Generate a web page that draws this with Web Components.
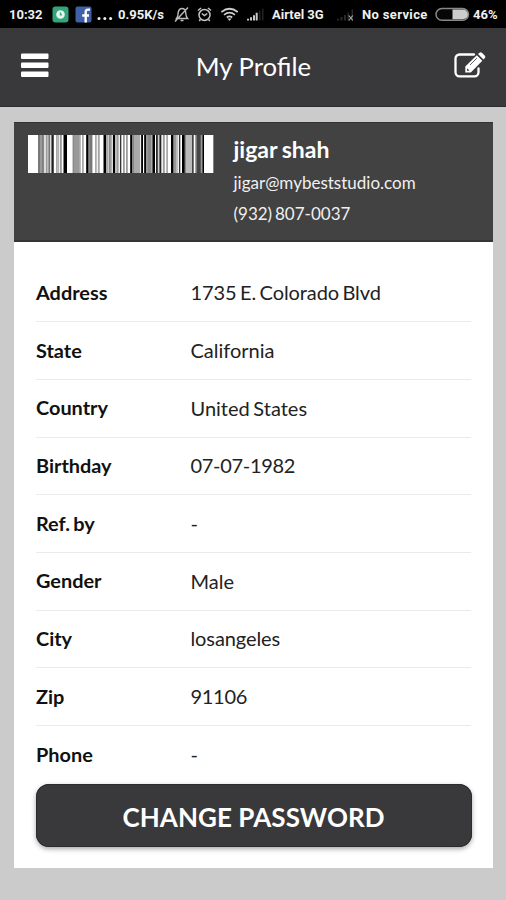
<!DOCTYPE html>
<html lang="en">
<head>
<meta charset="utf-8">
<title>My Profile</title>
<style>
html,body{margin:0;height:100%;background:#cbcbcb;overflow:hidden}
body{font-family:Lato,"Liberation Sans",sans-serif;color:#111}
</style>
</head>
<body>
<profile-screen></profile-screen>
<script>
const define = (name, html, setup) => customElements.define(name, class extends HTMLElement {
  constructor() {
    super();
    this.attachShadow({mode: 'open'}).innerHTML = html;
  }
  connectedCallback() { if (setup) setup(this, this.shadowRoot); }
});

define('status-bar', `
<style>
:host{display:grid;grid-template-columns:43px 23px 22px 21px 56px 23px 24px 26px 25px 65px 25px 73px 38px 33px;height:28px;padding-left:9px;box-sizing:border-box;background:#000;color:#f0f0f0;font:700 13px/30px Roboto,sans-serif;align-items:center;white-space:nowrap;overflow:hidden}
svg{display:block;margin-top:1px}
.t{height:28px;line-height:30px}
.wide{letter-spacing:.35px}
</style>
<span class="t">10:32</span>
<svg width="17" height="17" viewBox="0 0 17 17"><rect x=".5" y=".5" width="16" height="16" rx="3" fill="#35a47c"/><circle cx="8.5" cy="8.500" r="4.300" fill="#e5f5ee"/><path d="M8.500 6.500v2.300h1.500" fill="none" stroke="#35a47c" stroke-width="1.300"/></svg>
<svg width="17" height="17" viewBox="0 0 17 17"><rect x=".5" y=".5" width="16" height="16" rx="2" fill="#3f5fa6"/><path d="M15 3.600h-2c-1.800 0-2.300.9-2.300 2.500V16.500M7.200 9.500H14" fill="none" stroke="#fff" stroke-width="2.400"/></svg>
<svg width="17" height="17" viewBox="0 0 17 17" fill="#eee"><circle cx="2" cy="12.600" r="1.500"/><circle cx="7.800" cy="12.600" r="1.500"/><circle cx="13.600" cy="12.600" r="1.500"/></svg>
<span class="t">0.95K/s</span>
<svg width="17" height="17" viewBox="0 0 17 17" fill="none" stroke="#bbb" stroke-width="1.400"><path d="M2.500 12.500C4.500 10.500 3.700 8.500 4.300 6 4.900 3.500 6.300 2.500 8 2.500s3.200 1 3.600 3.500c.5 2.500 0 4.500 2 6.500zM6.500 14.500h3M14 1.500L1 15.500"/></svg>
<svg width="17" height="17" viewBox="0 0 17 17" fill="none" stroke="#c4c4c4" stroke-width="1.500"><circle cx="7.500" cy="9" r="5.500"/><path d="M1 4.500L4 2M14 4.500L11 2M4.800 7.500L7.500 9.500l2.700-2M3.300 13.500l-1 1.500M11.700 13.500l1 1.500"/></svg>
<svg width="18" height="17" viewBox="0 0 18 17" fill="none" stroke="#ccc" stroke-width="1.700"><path d="M.3 6Q8.500-.5 16.700 6M3 8.800Q8.500 4.500 14 8.800M5.800 11.500Q8.500 9.300 11.200 11.500"/><path d="M6.500 12.500h4l-2 2.500z" fill="#ccc" stroke="none"/></svg>
<svg width="18" height="17" viewBox="0 0 18 17"><path d="M0 12.800h2V14.500H0zM3 11.300h2v3.200H3zM6 9.300h2v5.200H6zM8.700 6.800h2v7.700h-2z" fill="#c8c8c8"/><path d="M12 4.500h1.500v10H12zM15 2.500h1.500v12H15z" fill="#222"/></svg>
<span class="t">Airtel 3G</span>
<svg width="18" height="17" viewBox="0 0 18 17"><path d="M0 12.800h2v1.700H0zM3.500 11h2v3.500h-2zM7 9h2v5.500H7zM10.500 6.500h1.500v8h-1.500zM14.500 3.500h1.500v11h-1.500z" fill="#292929"/><path d="M11.800 9.500l4 5M15.800 9.500l-4 5" stroke="#aaa" stroke-width="1.200"/></svg>
<span class="t wide">No service</span>
<svg width="35" height="15" viewBox="0 0 35 15"><rect x="1" y="1.500" width="32.500" height="11.800" rx="5.900" fill="#060606" stroke="#888" stroke-width="1.500"/><path d="M17.500 2.500h10.500a4.900 4.900 0 0 1 0 9.800H17.500z" fill="#ccc"/></svg>
<span class="t">46%</span>`);

define('title-bar', `
<style>
:host{display:grid;grid-template-columns:60px 1fr 60px;align-items:center;height:79px;box-sizing:border-box;padding-bottom:2px;background:#39393b;border-bottom:1px solid #2d2d2e;color:#fff}
.menu{margin-left:21px}
.edit{margin-left:7px}
svg{display:block}
h1{margin:0 0 0 1px;text-align:center;font-weight:400;font-size:25.700px;line-height:32px}
</style>
<svg class="menu" width="28" height="26" viewBox="0 0 28 26" fill="#fff"><rect y="0.500" width="27.500" height="5.500" rx="1"/><rect y="9.500" width="27.500" height="5.500" rx="1"/><rect y="18.500" width="27.500" height="5.500" rx="1"/></svg>
<h1><slot></slot></h1>
<svg class="edit" width="34" height="30" viewBox="0 0 34 30"><path d="M21 3.500H6.500a4 4 0 0 0-4 4v13.800a4 4 0 0 0 4 4h15a4 4 0 0 0 4-4v-4" fill="none" stroke="#fff" stroke-width="2.300" stroke-linecap="round"/><path d="M12.300 21.500v-6L23.800 4.200l5.500 5.500L17.800 21.500zM25 3l1.500-1.300q1.200-1 2.400 0l3 3q1 1.200 0 2.400L30.500 8.500z" fill="#fff"/><path d="M17 14L24 7" stroke="#39393b" stroke-width=".8"/><path d="M14 17.200v2.600h2.600z" fill="#39393b"/></svg>`);

define('bar-code', `
<style>:host{display:block;width:186px;height:38px}svg{display:block}</style>
<svg width="186" height="38" viewBox="54 0 558 38" preserveAspectRatio="none"></svg>`, (el, root) => {
  const bars = '54fff 84777 90999 98888 102ddd 108999 112eee 116777 120ddd 125222 129555 132fff 139bbb 146eee 151aaa 155fff 161000 171fff 186ccc 190999 208ccc 212fff 217bbb 222fff 229000 235888 240777 247fff 255aaa 259eee 265bbb 270fff 281000 288aaa 292ccc 298999 304ddd 309000 315bbb 321999 325eee 331111 334fff 340aaa 344fff 349aaa 353fff 361000 366888 372aaa 390eee 394000 399fff 403000 409ccc 413888 423aaa 428000 435fff 439000 443ccc 449222 454eee 460aaa 464fff 470aaa 474fff 483000 490999 498bbb 502eee 507333 511fff 516000 524888 528bbb 547333 551fff 557777 562444 572999 578000 582fff'
    .split(' ').map(s => [+s.slice(0, -3), s.slice(-3)]);
  root.querySelector('svg').innerHTML = bars.map(([x, c], i) =>
    `<rect x="${x}" width="${(bars[i + 1] || [610])[0] - x}" height="38" fill="#${c}"/>`).join('');
});

define('profile-header', `
<style>
:host{display:flex;height:120px;box-sizing:border-box;padding:13px 14px 0;gap:19.500px;background:#424242;color:#fff;box-shadow:inset 0 1px #333,inset 0 -2px #353535}
h2{margin:0;font-size:23px;line-height:30px;font-weight:700;word-spacing:-1px}
.info{white-space:nowrap;margin-top:-1px}
p{margin:0;font-size:17px;line-height:31px;color:#f0f0f0;word-spacing:-1.500px}
.mail{margin-top:2.500px}
</style>
<bar-code></bar-code>
<div class="info"><h2><slot name="name"></slot></h2><p class="mail"><slot name="mail"></slot></p><p><slot name="phone"></slot></p></div>`);

define('detail-row', `
<style>
:host{display:grid;grid-template-columns:154.500px 1fr;align-items:center;height:57.670px;box-sizing:border-box;border-bottom:1px solid #ebebeb;font-size:20px;line-height:28px;white-space:nowrap;word-spacing:-1.500px}
:host(:last-of-type){border-bottom:0}
:host([tight]){letter-spacing:-.1px}
:host([numeric]){letter-spacing:-.3px}
b{font-weight:700;font-size:19.900px;letter-spacing:0;margin-top:-2px}
span{color:#222;margin-top:-1px}
</style>
<b></b><span><slot></slot></span>`, (el, root) => { root.querySelector('b').textContent = el.getAttribute('label'); });

define('action-button', `
<style>
:host{display:block}
button{display:block;width:100%;height:63px;border:0;border-radius:13px;background:#39393b;color:#fff;font:700 26px/63px Lato,sans-serif;letter-spacing:.07px;padding:2px 1px 0 0;box-shadow:0 2px 5px rgba(0,0,0,.35),inset 0 0 0 1px #2c2c2e}
</style>
<button><slot></slot></button>`);

define('profile-card', `
<style>
:host{display:block;margin:15px 13px 0 14px;height:746px;background:#fff}
.body{padding:22.600px 22px 0}
action-button{margin:.4px -1px 0 0}
</style>
<profile-header><span slot="name">jigar shah</span><span slot="mail">jigar@mybeststudio.com</span><span slot="phone">(932) 807-0037</span></profile-header>
<div class="body">
<detail-row label="Address" tight>1735 E. Colorado Blvd</detail-row>
<detail-row label="State">California</detail-row>
<detail-row label="Country">United States</detail-row>
<detail-row label="Birthday" numeric>07-07-1982</detail-row>
<detail-row label="Ref. by">-</detail-row>
<detail-row label="Gender">Male</detail-row>
<detail-row label="City" tight>losangeles</detail-row>
<detail-row label="Zip" numeric>91106</detail-row>
<detail-row label="Phone">-</detail-row>
<action-button>CHANGE PASSWORD</action-button>
</div>`);

define('profile-screen', `
<style>:host{display:flow-root;width:506px;height:900px;background:#cbcbcb}</style>
<status-bar></status-bar>
<title-bar>My Profile</title-bar>
<profile-card></profile-card>`);
</script>
</body>
</html>
